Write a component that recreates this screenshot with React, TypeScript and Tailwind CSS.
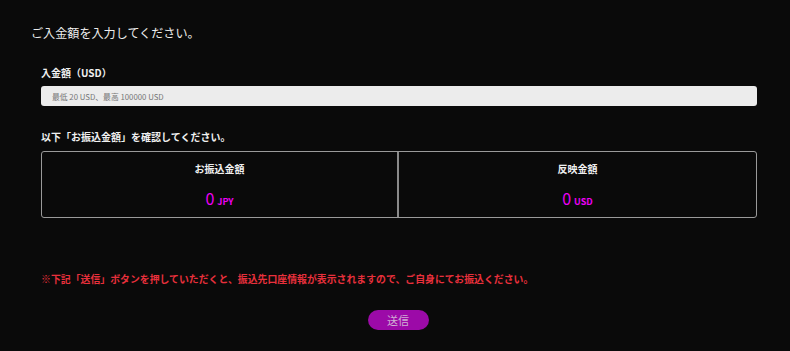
export default function App() {
  return (
    <div
      className="min-h-[351px] w-full bg-[#0a0a0a] text-[#e6e6e6]"
      style={{ fontFamily: '"Noto Sans CJK JP", "Noto Sans", sans-serif' }}
    >
      <div className="pl-[31px] pr-[33px] pt-[23px]">
        <h1 className="h-[20px] text-[12.1px] leading-[20px] font-normal text-[#ececec]">
          ご入金額を入力してください。
        </h1>

        <div className="pl-[10px]">
          <label className="mt-[22px] block h-[16px] text-[10px] leading-[16px] font-bold text-[#f0f0f0]">
            入金額（USD）
          </label>
          <input
            type="text"
            placeholder="最低 20 USD、最高 100000 USD"
            className="mt-[5px] block h-[20px] w-full rounded-[3px] bg-[#ececec] px-[11px] text-[7.8px] text-[#555] placeholder:text-[#777] outline-none"
          />

          <p className="mt-[23px] h-[16px] text-[10px] leading-[16px] font-bold text-[#f0f0f0]">
            以下「お振込金額」を確認してください。
          </p>

          <div className="mt-[6px] grid h-[67px] grid-cols-2 rounded-[3px] border border-[#9a9a9a]">
            <div className="flex flex-col items-center border-r-2 border-[#8a8a8a] pt-[9px]">
              <span className="text-[10px] leading-[16px] font-bold text-[#f0f0f0]">お振込金額</span>
              <span className="mt-[12px] flex items-baseline gap-[3px] text-[#ee00f6]">
                <span className="text-[16px] leading-[18px]">0</span>
                <span className="text-[9px] font-bold">JPY</span>
              </span>
            </div>
            <div className="flex flex-col items-center pt-[9px]">
              <span className="text-[10px] leading-[16px] font-bold text-[#f0f0f0]">反映金額</span>
              <span className="mt-[12px] flex items-baseline gap-[3px] text-[#ee00f6]">
                <span className="text-[16px] leading-[18px]">0</span>
                <span className="text-[9px] font-bold">USD</span>
              </span>
            </div>
          </div>

          <p className="mt-[53px] h-[16px] text-[9.9px] leading-[16px] font-bold text-[#e8303c]">
            ※下記「送信」ボタンを押していただくと、振込先口座情報が表示されますので、ご自身にてお振込ください。
          </p>

          <div className="mt-[23px] flex justify-center pr-[2px]">
            <button className="h-[20px] w-[61px] rounded-full bg-[#9c0aa8] text-[11px] leading-[20px] text-[#d0b0d4]">
              送信
            </button>
          </div>
        </div>
      </div>
    </div>
  );
}
